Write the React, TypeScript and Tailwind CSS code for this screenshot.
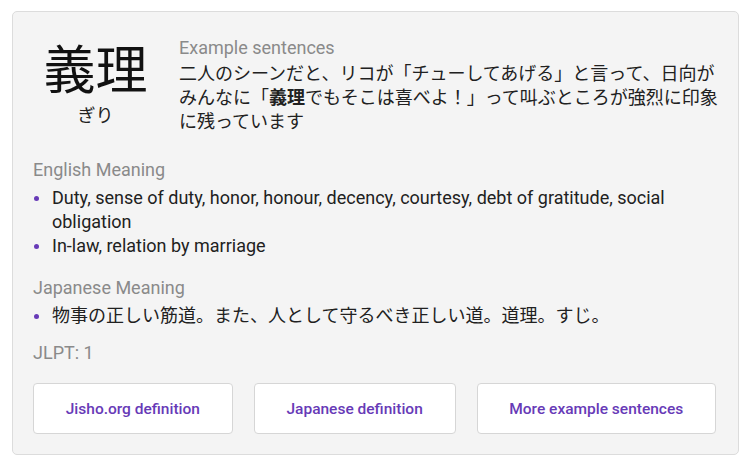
import React from 'react';

const meanings = [
  'Duty, sense of duty, honor, honour, decency, courtesy, debt of gratitude, social obligation',
  'In-law, relation by marriage',
];

const jpMeanings = ['物事の正しい筋道。また、人として守るべき正しい道。道理。すじ。'];

const links = ['Jisho.org definition', 'Japanese definition', 'More example sentences'];

function Bullet({ children }: { children: React.ReactNode }) {
  return (
    <li className="flex items-start">
      <span className="w-[19px] shrink-0 pt-[10px] pl-[1px]">
        <span className="block w-[5px] h-[5px] rounded-full bg-[#673ab7]" />
      </span>
      <span className="flex-1">{children}</span>
    </li>
  );
}

export default function App() {
  return (
    <div
      className="min-h-screen bg-white pt-[11px] pl-3"
      style={{ fontFamily: 'Roboto, "Noto Sans CJK JP", sans-serif' }}
    >
      <div className="w-[727px] bg-[#f4f4f4] border border-[#dcdcdc] rounded-[5px] px-5 pt-6 pb-5 text-[18px] leading-[24px] text-[#212121]">
        {/* Word + example sentence */}
        <div className="flex items-start mr-[-4px]">
          <div className="w-[125px] shrink-0 flex flex-col items-center mt-[10px]">
            <span className="text-[52px] leading-[52px] text-[#111]">義理</span>
            <span className="mt-[6px]">ぎり</span>
          </div>
          <div className="ml-[21px] flex-1 min-w-0">
            <p className="text-[#8a8a8a]">Example sentences</p>
            <p className="mt-[2px]">
              二人のシーンだと、リコが「チューしてあげる」と言って、日向がみんなに「
              <span className="font-bold">義理</span>
              でもそこは喜べよ！」って叫ぶところが強烈に印象に残っています
            </p>
          </div>
        </div>

        {/* English meaning */}
        <p className="mt-6 text-[#8a8a8a]">English Meaning</p>
        <ul className="mt-1">
          {meanings.map((m) => (
            <Bullet key={m}>{m}</Bullet>
          ))}
        </ul>

        {/* Japanese meaning */}
        <p className="mt-[18px] text-[#8a8a8a]">Japanese Meaning</p>
        <ul className="mt-1">
          {jpMeanings.map((m) => (
            <Bullet key={m}>{m}</Bullet>
          ))}
        </ul>

        <p className="mt-[13px] text-[#8a8a8a]">JLPT: 1</p>

        {/* Links */}
        <div className="mt-[18px] flex gap-[21px] mr-[2px]">
          {links.map((l) => (
            <button
              key={l}
              className="flex-auto h-[51px] px-[30px] bg-white border border-[#d6d6d6] rounded-[4px] text-[15.5px] font-medium text-[#673ab7] whitespace-nowrap"
            >
              {l}
            </button>
          ))}
        </div>
      </div>
    </div>
  );
}
